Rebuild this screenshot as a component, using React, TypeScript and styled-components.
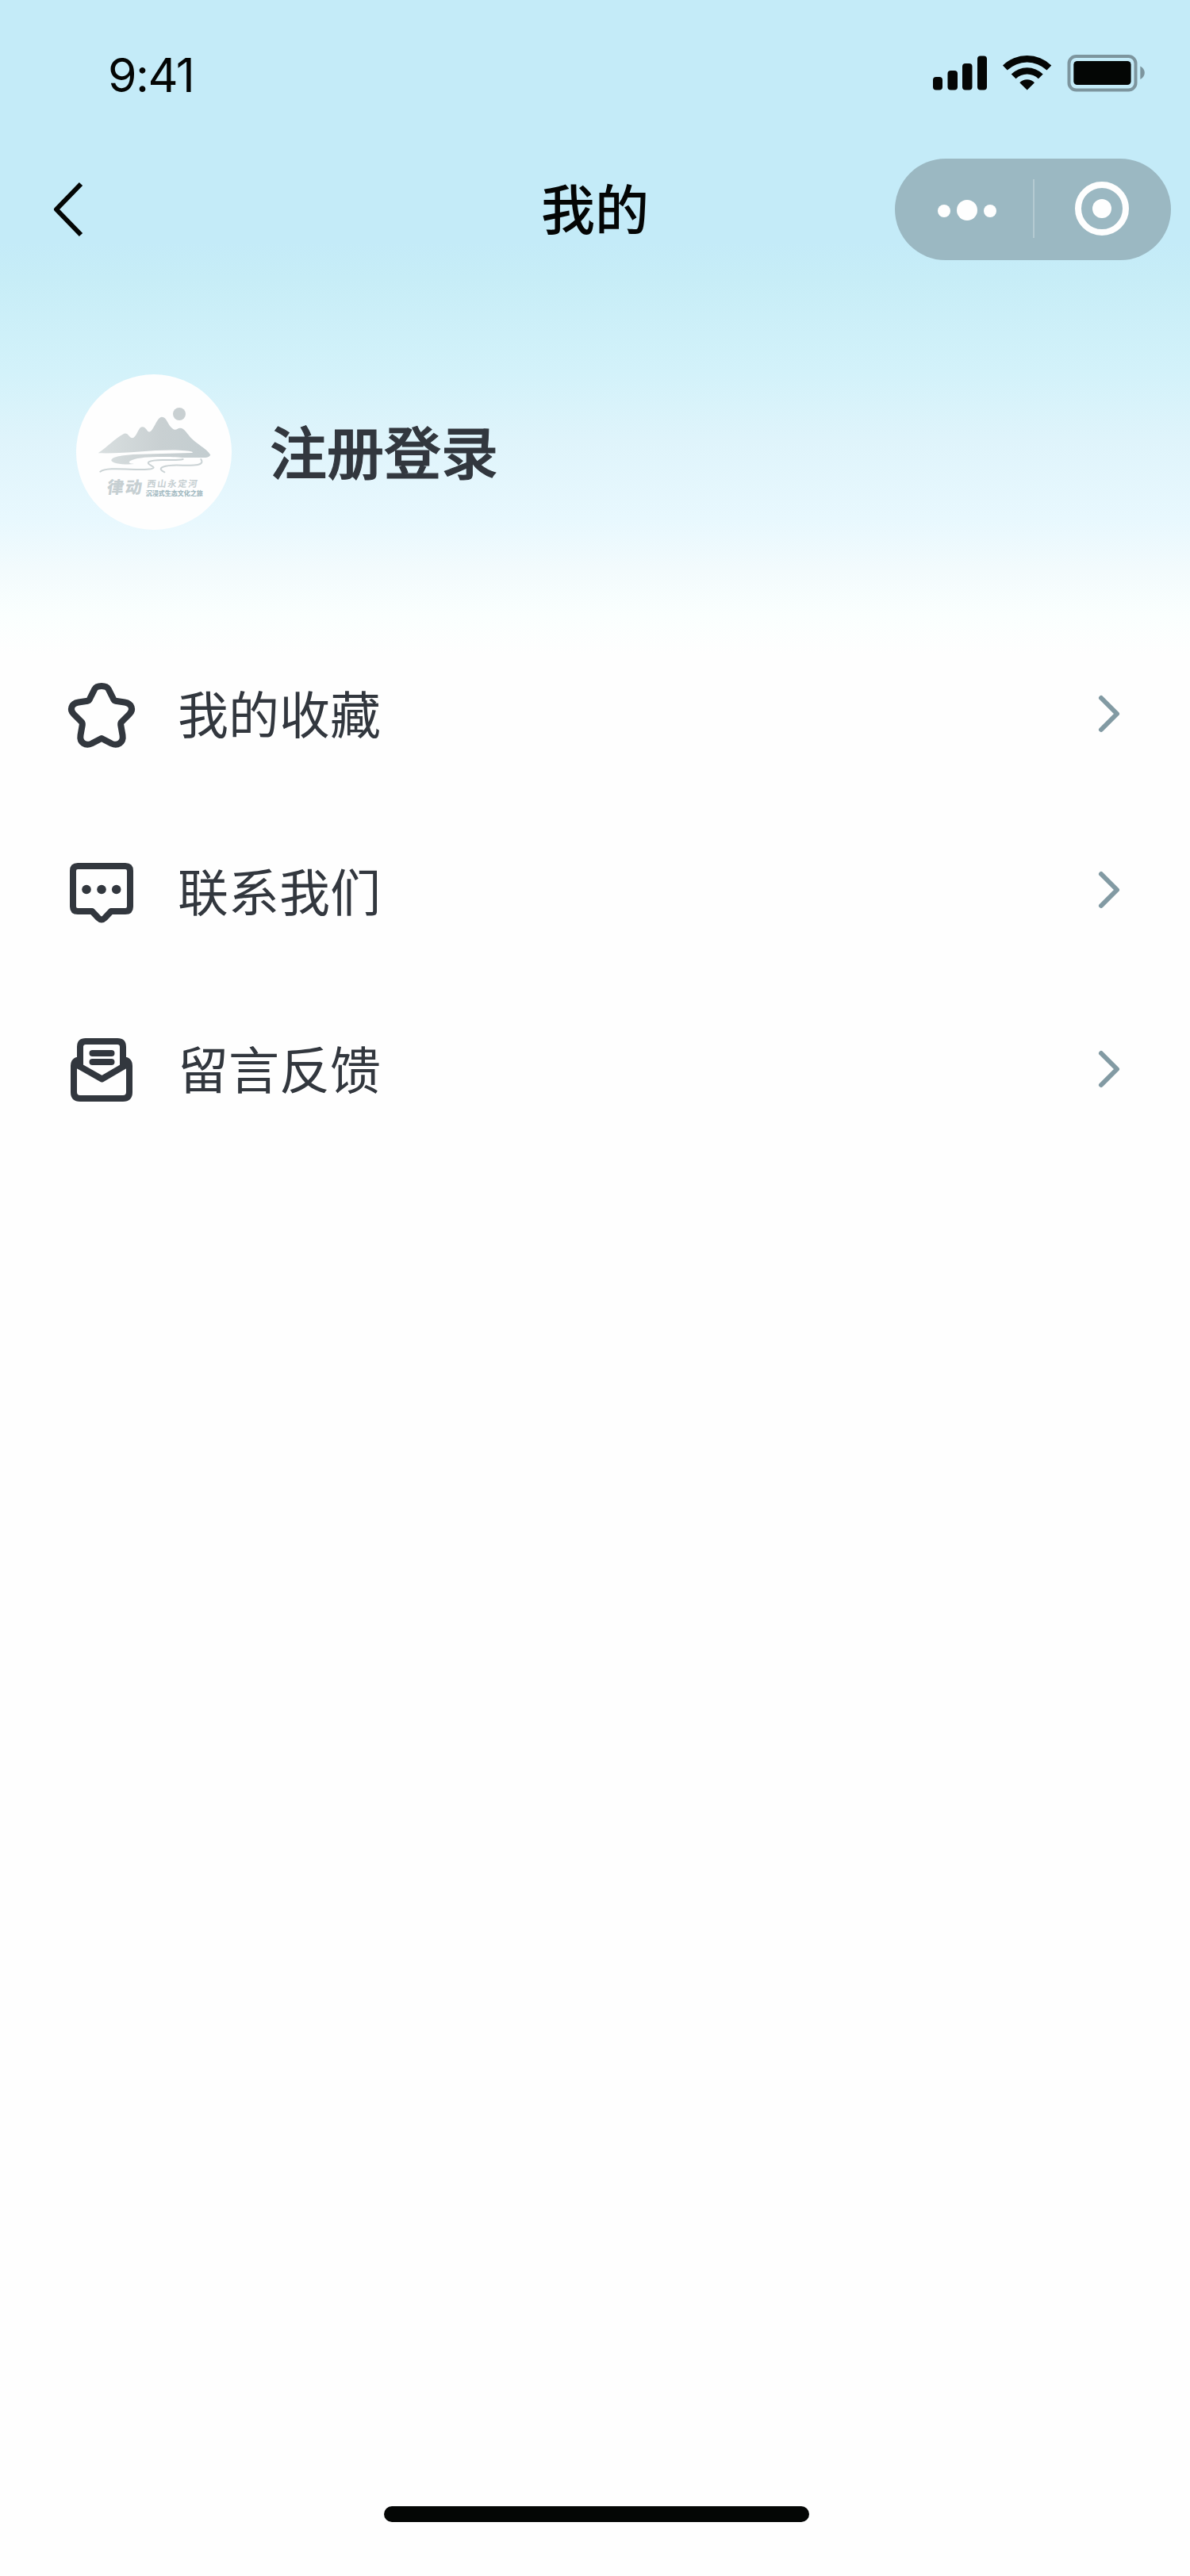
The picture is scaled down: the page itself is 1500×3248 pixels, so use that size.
import React from 'react';
import styled, { createGlobalStyle } from 'styled-components';

const Global = createGlobalStyle`
  html, body { margin: 0; background: #fefefe; }
  * { box-sizing: border-box; }
`;

const Screen = styled.div`
  width: 1500px;
  height: 3248px;
  display: flex;
  flex-direction: column;
  overflow: hidden;
  color: #32373e;
  font-family: Inter, 'Noto Sans CJK SC', sans-serif;
  background: linear-gradient(
    180deg,
    #c4ebf8 0,
    #c4ebf8 305px,
    #c7edf7 350px,
    #d3f2fa 470px,
    #dff4fb 555px,
    #e8f8fe 655px,
    #f3fbfd 720px,
    #fafffe 775px,
    #fefefe 825px
  );
`;

const StatusBar = styled.header`
  height: 176px;
  padding: 66px 56px 0 136px;
  display: flex;
  justify-content: space-between;
  align-items: flex-start;
  color: #040605;
`;

const Time = styled.time`
  font-size: 59px;
  line-height: 58px;
  letter-spacing: -1.6px;
`;

const StatusIcons = styled.svg`
  width: 270px;
  height: 50px;
  display: block;
`;

const NavBar = styled.nav`
  height: 176px;
  padding: 0 24px 0 64px;
  display: grid;
  grid-template-columns: 618px 136px 1fr;
  align-items: center;
  color: #040605;
`;

const BackIcon = styled.svg`
  width: 44px;
  height: 72px;
  display: block;
`;

const Title = styled.h1`
  margin: 0;
  padding-top: 2px;
  font-size: 68px;
  line-height: 96px;
  font-weight: 500;
  text-align: center;
`;

const Capsule = styled.div`
  justify-self: end;
  width: 348px;
  height: 128px;
  border-radius: 64px;
  background: #9bb8c2;
`;

const CapsuleIcons = styled.svg`
  width: 348px;
  height: 128px;
  display: block;
`;

const Profile = styled.section`
  height: 436px;
  padding: 0 96px;
  display: flex;
  align-items: center;
  gap: 48px;
`;

const Avatar = styled.svg`
  width: 196px;
  height: 196px;
  border-radius: 50%;
  background: #fefefe;
`;

const Name = styled.h2`
  margin: 0;
  padding-top: 3px;
  font-size: 72px;
  line-height: 104px;
  font-weight: 500;
  -webkit-text-stroke: 1.2px currentColor;
`;

const Menu = styled.ul`
  margin: 0;
  padding: 0;
  list-style: none;
  flex: 1;
`;

const Row = styled.li`
  height: 224px;
  padding: 0 80px;
  display: flex;
  align-items: center;
`;

const RowIcon = styled.svg`
  width: 96px;
  height: 96px;
  flex: none;
`;

const Label = styled.span`
  margin-left: 48px;
  padding-top: 4px;
  flex: 1;
  font-size: 64px;
  line-height: 92px;
`;

const Chevron = styled.svg<{ $lift?: number }>`
  width: 40px;
  height: 60px;
  margin-bottom: ${({ $lift = 0 }) => $lift * 2}px;
`;

const Footer = styled.footer`
  height: 108px;
  display: flex;
  justify-content: center;
  padding: 20px 0 0 4px;
`;

const HomeBar = styled.div`
  width: 536px;
  height: 20px;
  border-radius: 10px;
  background: #040605;
`;

const line = { fill: 'none', stroke: 'currentColor', strokeWidth: 8 } as const;

function StatusGlyphs() {
  return (
    <StatusIcons viewBox="1174 66 270 50" fill="currentColor">
      <rect x="1176" y="97" width="12" height="16.5" rx="4" />
      <rect x="1194.5" y="89" width="12.5" height="24.5" rx="4" />
      <rect x="1213" y="80" width="12.5" height="33.5" rx="4" />
      <rect x="1232" y="70.5" width="12" height="43" rx="4" />
      <path d="M1264 82.5a44 44 0 0 1 61.300 0l-5.800 6a36 36 0 0 0-49.700 0z" />
      <path d="M1274.700 93.500a28.500 28.500 0 0 1 40 0l-5.800 5.800a20.300 20.300 0 0 0-28.400 0z" />
      <path d="M1285.300 104.200a13 13 0 0 1 18.700 0l-9.300 9.300z" />
      <rect x="1347.500" y="71" width="84" height="42.500" rx="9" fill="none" stroke="#7d959e" strokeWidth="4" />
      <rect x="1353.300" y="77" width="72.300" height="30" rx="4.500" />
      <path d="M1437.300 83.500c3.500 1.500 5.500 4.800 5.500 8.200s-2 6.800-5.500 8.300z" fill="#7d959e" />
    </StatusIcons>
  );
}

function Logo() {
  return (
    <Avatar viewBox="0 0 588 588">
      <defs>
        <linearGradient id="peak" x1="0" x2="1" y1="0" y2="0">
          <stop offset="0" stopColor="#d9dfe0" />
          <stop offset=".55" stopColor="#c9d0d2" />
          <stop offset="1" stopColor="#c3cdd0" />
        </linearGradient>
      </defs>
      <circle cx="390" cy="150" r="24" fill="#c9d0d2" />
      <path
        fill="url(#peak)"
        d="M83 298C118 274 150 240 176 227C187 220 194 225 199 232C207 243 216 243 222 235C234 222 236 199 251 199C266 199 268 222 279 217C296 207 306 161 324 161C343 161 345 190 364 205C378 216 382 203 393 203C410 203 420 226 437 243C462 267 492 281 508 305C502 313 494 315 481 315H402C352 311 246 309 212 324C190 333 202 337 219 339C185 343 132 337 133 325C135 311 177 306 216 303L437 297C450 294 430 288 390 287C280 284 200 301 83 298Z"
      />
      <path
        fill="none"
        stroke="#cbd3d5"
        strokeWidth="6"
        strokeLinecap="round"
        d="M404 321C368 331 302 315 275 331C261 343 314 350 283 358C239 367 117 346 91 368M472 321C492 353 417 342 364 344C323 346 306 357 334 370"
      />
      <g fill="#c6cfd2" fontFamily="'Noto Sans CJK SC', sans-serif" fontWeight="900">
        <text transform="translate(114 449) skewX(-8)" fontSize="63" textLength="132">律动</text>
        <text transform="translate(266 427) skewX(-8)" fontSize="34" fontWeight="700" textLength="190">西山永定河</text>
        <text x="263" y="460" fontSize="24" fill="#a3bac2" textLength="216">沉浸式生态文化之旅</text>
      </g>
    </Avatar>
  );
}

function StarIcon() {
  return (
    <RowIcon viewBox="80 852 96 96">
      <path
        {...line}
        strokeLinejoin="round"
        d="M119.200 869C122 863.700 134 863.700 136.800 869L142.800 881C143.300 882.500 144 883.500 145.500 883.700L157 885.500C166.500 887 168.500 895 163 900.500L153.500 910C152.300 911.300 152 912.500 152.200 914L154.500 927C156 936.500 148 941 140.500 937.500L128 931L115.500 937.500C108 941 100 936.500 101.500 927L103.800 914C104 912.500 103.700 911.300 102.500 910L93 900.500C87.500 895 89.500 887 99 885.500L110.500 883.700C112 883.500 112.700 882.500 113.200 881Z"
      />
    </RowIcon>
  );
}

function ChatIcon() {
  return (
    <RowIcon viewBox="80 1076 96 96">
      <path
        {...line}
        strokeLinejoin="round"
        d="M98 1092H158Q164 1092 164 1098V1143Q164 1149 158 1149H140L132 1157.500Q128 1161.500 124 1157.500L116 1149H98Q92 1149 92 1143V1098Q92 1092 98 1092Z"
      />
      <g fill="currentColor">
        <circle cx="109" cy="1121.500" r="5.800" />
        <circle cx="128" cy="1121.500" r="5.800" />
        <circle cx="146.700" cy="1121.500" r="5.800" />
      </g>
    </RowIcon>
  );
}

function MailIcon() {
  return (
    <RowIcon viewBox="80 1300 96 96">
      <path {...line} strokeLinecap="round" d="M116.500 1328H140.500M116.500 1339H140.500" />
      <path
        {...line}
        strokeLinejoin="round"
        d="M101 1343V1320Q101 1313 108 1313H148Q155 1313 155 1320V1343M101 1336Q93 1337 93 1344V1377Q93 1385 101 1385H155Q163 1385 163 1377V1344Q163 1337 155 1336M95 1341.500L128.500 1360.500L161 1341.500"
      />
    </RowIcon>
  );
}

const items = [
  { label: '我的收藏', Icon: StarIcon, lift: 0 },
  { label: '联系我们', Icon: ChatIcon, lift: 2 },
  { label: '留言反馈', Icon: MailIcon, lift: 0 },
];

export default function App() {
  return (
    <Screen>
      <Global />
      <StatusBar>
        <Time>9:41</Time>
        <StatusGlyphs />
      </StatusBar>
      <NavBar>
        <BackIcon viewBox="64 228 44 72">
          <path d="M102 232L71 264L102 296" fill="none" stroke="currentColor" strokeWidth="6" strokeLinejoin="round" />
        </BackIcon>
        <Title>我的</Title>
        <Capsule>
          <CapsuleIcons viewBox="1128 200 348 128" fill="#fefefe">
            <circle cx="1190" cy="266" r="8" />
            <circle cx="1219" cy="265" r="13" />
            <circle cx="1248" cy="266" r="8" />
            <rect x="1302" y="226" width="2" height="74" fill="#b4cad1" />
            <circle cx="1389" cy="263" r="30" fill="none" stroke="#fefefe" strokeWidth="8" />
            <circle cx="1389" cy="263" r="12" />
          </CapsuleIcons>
        </Capsule>
      </NavBar>
      <Profile>
        <Logo />
        <Name>注册登录</Name>
      </Profile>
      <Menu>
        {items.map(({ label, Icon, lift }) => (
          <Row key={label}>
            <Icon />
            <Label>{label}</Label>
            <Chevron viewBox="1380 870 40 60" $lift={lift}>
              <path d="M1388 880L1408 900L1388 920" fill="none" stroke="#829aa3" strokeWidth="6" strokeLinecap="round" strokeLinejoin="round" />
            </Chevron>
          </Row>
        ))}
      </Menu>
      <Footer>
        <HomeBar />
      </Footer>
    </Screen>
  );
}
